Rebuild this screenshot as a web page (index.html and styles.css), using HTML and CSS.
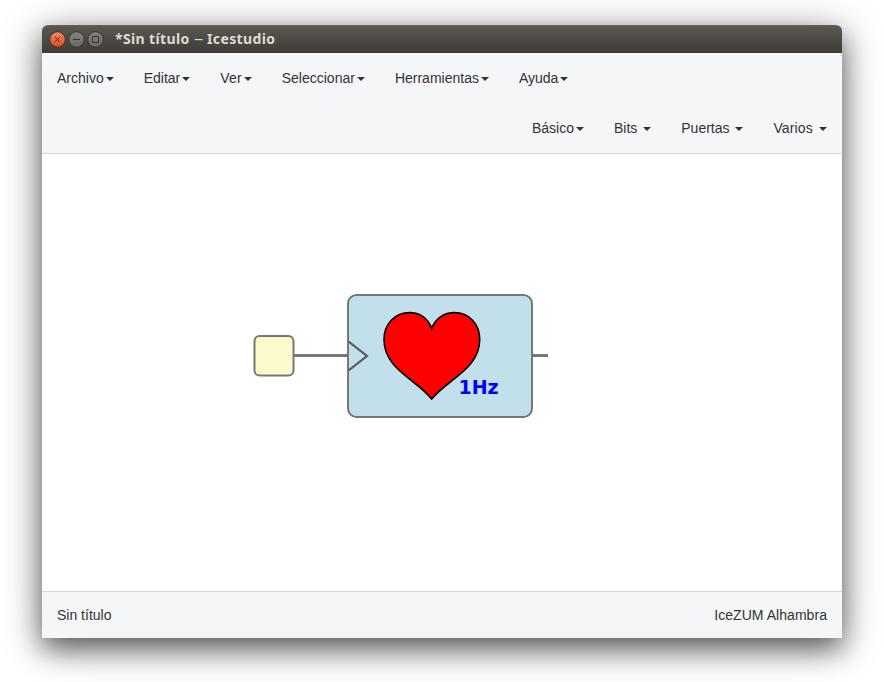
FILE: index.html
```html
<!DOCTYPE html>
<html lang="es">
<head>
<meta charset="utf-8">
<title>Icestudio</title>
<link rel="stylesheet" href="styles.css">
</head>
<body>
<div class="window">
  <header class="titlebar">
    <svg class="controls" width="56" height="18" viewBox="0 0 56 18">
      <defs>
        <linearGradient id="close" x1="0" y1="0" x2="0" y2="1"><stop offset="0" stop-color="#f58a68"/><stop offset="1" stop-color="#e2471c"/></linearGradient>
        <linearGradient id="plain" x1="0" y1="0" x2="0" y2="1"><stop offset="0" stop-color="#85847f"/><stop offset="1" stop-color="#696863"/></linearGradient>
      </defs>
      <g stroke="#35342f">
        <circle cx="9.5" cy="8.500" r="7.8" fill="url(#close)"/>
        <circle cx="28.5" cy="8.500" r="7.8" fill="url(#plain)"/>
        <circle cx="47.5" cy="8.500" r="7.8" fill="url(#plain)"/>
        <path d="M7 6l5 5m0-5l-5 5M25 8.5h7M44.5 5.5h6v6h-6z" fill="none"/>
      </g>
    </svg>
    <span class="title">*Sin título <span class="dash">–</span> Icestudio</span>
  </header>
  <nav class="navbar">
    <div class="menu">
      <a class="item">Archivo<b class="caret"></b></a>
      <a class="item">Editar<b class="caret"></b></a>
      <a class="item item-wide">Ver<b class="caret"></b></a>
      <a class="item">Seleccionar<b class="caret"></b></a>
      <a class="item">Herramientas<b class="caret"></b></a>
      <a class="item">Ayuda<b class="caret"></b></a>
    </div>
    <div class="menu menu-right">
      <a class="item">Básico<b class="caret"></b></a>
      <a class="item">Bits <b class="caret"></b></a>
      <a class="item">Puertas <b class="caret"></b></a>
      <a class="item item-wide">Varios <b class="caret"></b></a>
    </div>
  </nav>
  <main class="canvas">
    <svg width="800" height="437" viewBox="42 154 800 437">
      <path class="wire" d="M294 355.5h54M532 355.5h16"/>
      <rect class="block input" x="254.5" y="336" width="39" height="39.5" rx="5"/>
      <rect class="block code" x="348" y="295" width="184" height="122" rx="8.5"/>
      <path class="clock" d="M348.5 341.5L367 356L348.5 370.5"/>
      <path class="heart" d="M431.7 328.5C428 318 419.5 312.6 409.5 312.6C395 312.6 384 324 384 339.5C384 369 416 379 431.7 399C447.5 379 479.7 369 479.7 339.5C479.7 324 469 312.6 454.5 312.6C444.5 312.6 435.5 318 431.7 328.5Z"/>
      <text class="rate" x="458.5" y="394">1Hz</text>
    </svg>
  </main>
  <footer class="footer"><span>Sin título</span><span class="board">IceZUM Alhambra</span></footer>
</div>
</body>
</html>
```
FILE: styles.css
```css
* { box-sizing: border-box; }
body {
  margin: 0;
  padding: 25px 42px 44px;
  height: 682px;
  overflow: hidden;
  background: #fff;
  color: #333;
  font: 14px/20px "Liberation Sans", Arial, sans-serif;
}
.window {
  display: flex;
  flex-direction: column;
  height: 613px;
  background: #fff;
  border-radius: 6px 6px 0 0;
  box-shadow: 0 11px 28px rgba(0, 0, 0, .6), 0 4px 50px rgba(0, 0, 0, .2);
}
.titlebar {
  display: flex;
  align-items: center;
  height: 28px;
  padding-left: 6px;
  border-radius: 6px 6px 0 0;
  background: linear-gradient(#5a5850, #3d3c38);
  border-top: 1px solid #65635a;
}
.title {
  margin: 0 0 2px 11px;
  color: #dfdbd2;
  font: bold 14px/20px "Noto Sans", sans-serif;
  letter-spacing: .37px;
  white-space: nowrap;
}
.dash {
  display: inline-block;
  margin-right: 2px;
  font-weight: normal;
  transform: scaleX(1.3);
  transform-origin: left;
}
.navbar {
  height: 101px;
  background: #f5f6f8;
  border-bottom: 1px solid #d3d7db;
}
.menu { display: flex; height: 50px; }
.menu-right { justify-content: flex-end; }
.item { padding: 15px; white-space: pre; }
.item-wide { letter-spacing: .15px; }
.caret {
  display: inline-block;
  margin-left: 2px;
  vertical-align: middle;
  border-top: 4px solid #333;
  border-left: 4px solid transparent;
  border-right: 4px solid transparent;
}
.canvas { height: 437px; }
.canvas svg { display: block; }
.wire { stroke: #777; stroke-width: 3; fill: none; }
.block { stroke: #777; stroke-width: 2; }
.input { fill: #fcfacb; }
.code { fill: #c2dfec; }
.clock { fill: none; stroke: #555; stroke-width: 2.2; }
.heart { fill: red; stroke: #000; stroke-width: 1.6; }
.rate { fill: #00f; font: bold 19px "DejaVu Sans", sans-serif; }
.footer {
  display: flex;
  justify-content: space-between;
  height: 47px;
  padding: 13px 15px;
  background: #f5f6f8;
  border-top: 1px solid #d3d7db;
}
.board { letter-spacing: .05px; }
```
